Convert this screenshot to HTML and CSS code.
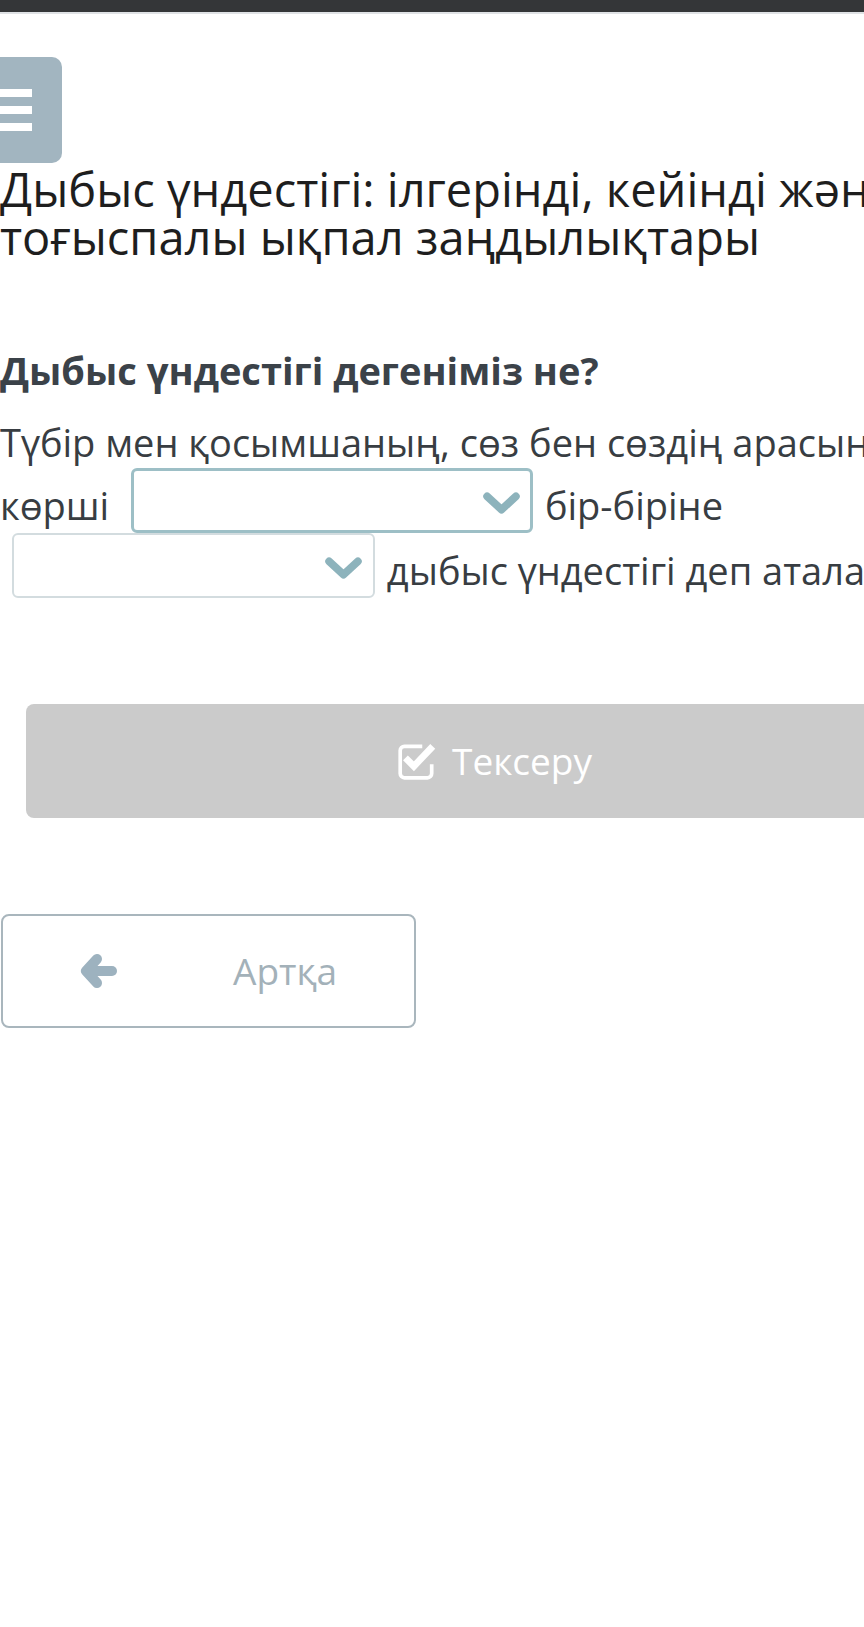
FILE: index.html
```html
<!DOCTYPE html>
<html lang="kk">
<head>
    <meta charset="UTF-8">
    <meta name="viewport" content="width=device-width, initial-scale=1.0">
    <title>Дыбыс үндестігі</title>
    <link rel="stylesheet" href="styles.css">
</head>
<body>
    <div class="topbar"></div>

    <div class="page">
        <button class="menu-button" aria-label="Мәзір">
            <span></span>
            <span></span>
            <span></span>
        </button>

        <h1 class="lesson-title">Дыбыс үндестігі: ілгерінді, кейінді және тоғыспалы ықпал заңдылықтары</h1>

        <h2 class="question">Дыбыс үндестігі дегеніміз не?</h2>

        <p class="answer-text">
            Түбір мен қосымшаның, сөз бен сөздің арасындағы көрші
            <span class="gap-select gap-wide is-focused">
                <svg class="chevron" viewBox="0 0 36 22"><polyline points="4,4 18,17 32,4"/></svg>
            </span>
            бір-біріне
            <span class="gap-select gap-narrow">
                <svg class="chevron" viewBox="0 0 36 22"><polyline points="4,4 18,17 32,4"/></svg>
            </span>
            дыбыс үндестігі деп аталады.
        </p>

        <button class="check-button" disabled>
            <svg class="check-icon" viewBox="0 0 40 36">
                <path class="box" d="M25 4H8a4 4 0 0 0-4 4v22a4 4 0 0 0 4 4h22a4 4 0 0 0 4-4v-9"/>
                <polyline class="tick" points="9,15 17,23 35,4"/>
            </svg>
            Тексеру
        </button>

        <button class="back-button">
            <svg class="back-icon" viewBox="0 0 38 34">
                <line x1="12" y1="17" x2="32" y2="17"/>
                <polyline points="17,5 6,17 17,29"/>
            </svg>
            <span>Артқа</span>
        </button>
    </div>
</body>
</html>
```

FILE: styles.css
```css
html, body {
    margin: 0;
    padding: 0;
    background: #fff;
    overflow-x: hidden;
}

body {
    font-family: "Open Sans", "Noto Sans", sans-serif;
    min-height: 1627px;
}

.topbar {
    height: 12px;
    background-color: #343638;
    border-bottom: 2px solid #dfe2e5;
}

.page {
    width: 1008px;
}

.menu-button {
    display: flex;
    flex-direction: column;
    justify-content: center;
    align-items: center;
    gap: 9px;
    width: 100px;
    height: 106px;
    margin: 43px 0 0 -38px;
    padding: 0;
    border: none;
    border-radius: 10px;
    background-color: #a2b5c0;
}

.menu-button span {
    display: block;
    width: 40px;
    height: 8px;
    background: #fff;
}

.lesson-title {
    margin: 2px 0 0;
    font-size: 47px;
    line-height: 48px;
    font-weight: 400;
    color: #1e1e1e;
}

.question {
    margin: 85px 0 0;
    font-size: 38px;
    line-height: 1.3;
    font-weight: 700;
    color: #3b4249;
}

.answer-text {
    margin: 23px 0 0;
    font-size: 38px;
    line-height: 1.3;
    color: #383d42;
}

.gap-select {
    display: inline-block;
    overflow: hidden;
    box-sizing: border-box;
    height: 65px;
    margin: 0 2px 0 12px;
    padding: 22px 11px 0 0;
    border: 2px solid #d3dcdf;
    border-radius: 6px;
    line-height: 0;
    text-align: right;
    vertical-align: -13px;
}

.gap-select.is-focused {
    padding: 21px 10px 0 0;
    border: 3px solid #9dbfc6;
}

.gap-wide {
    width: 402px;
}

.gap-narrow {
    width: 363px;
}

.chevron {
    width: 37px;
    height: 23px;
    vertical-align: top;
}

.chevron polyline {
    fill: none;
    stroke: #8db3bc;
    stroke-width: 7.5;
    stroke-linecap: round;
    stroke-linejoin: round;
}

.check-button {
    display: flex;
    justify-content: center;
    align-items: center;
    gap: 14px;
    width: 936px;
    height: 114px;
    margin: 106px 0 0 26px;
    border: none;
    border-radius: 8px;
    background-color: #cbcbcb;
    color: #fff;
    font-family: inherit;
    font-size: 37px;
}

.check-icon {
    width: 42px;
    height: 38px;
}

.check-icon .box {
    fill: none;
    stroke: #fff;
    stroke-width: 3.5;
}

.check-icon .tick {
    fill: none;
    stroke: #fff;
    stroke-width: 6.5;
    stroke-linejoin: miter;
}

.back-button {
    display: flex;
    align-items: center;
    gap: 115px;
    box-sizing: border-box;
    width: 415px;
    height: 114px;
    margin: 96px 0 0 1px;
    padding: 0 0 0 77px;
    border: 2px solid #a9b6bd;
    border-radius: 8px;
    background: #fff;
    color: #a3b1b9;
    font-family: inherit;
    font-size: 37px;
}

.back-icon {
    width: 38px;
    height: 34px;
}

.back-icon line,
.back-icon polyline {
    fill: none;
    stroke: #9db2bf;
    stroke-width: 10;
    stroke-linecap: round;
    stroke-linejoin: round;
}
```
